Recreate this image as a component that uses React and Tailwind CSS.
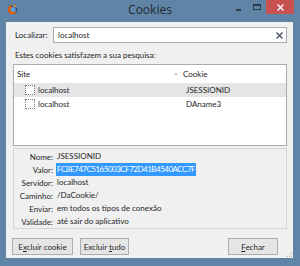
import React from "react";

const font = { fontFamily: 'Lato, "Open Sans", sans-serif' };

function FirefoxIcon() {
  return (
    <svg width="11" height="11" viewBox="0 0 16 16">
      <circle cx="8" cy="8" r="7" fill="#2b4c9b" />
      <circle cx="8.5" cy="8.5" r="4" fill="#5aa0e0" />
      <path d="M1.5 9 C1 5 3.5 1.5 7.5 1 C6 2.5 6 4 7 5 C5 5.5 4.5 8 6 10 C8 12.5 12 12 14 9 C14 12 11.5 15 8 15 C4.5 15 2 12.5 1.5 9 Z" fill="#e66000" />
      <path d="M7.5 1 C10 0.8 13 2.5 14.3 5.5 C13 4.5 11.5 4.2 10.5 4.6 C9.5 3 8.3 2 7.5 1 Z" fill="#f5a623" />
    </svg>
  );
}

export default function App() {
  const details = [
    ["Nome:", "JSESSIONID", false],
    ["Valor:", "FC8E747C5165003CF72D41B4540ACC7F", true],
    ["Servidor:", "localhost", false],
    ["Caminho:", "/DaCookie/", false],
    ["Enviar:", "em todos os tipos de conexão", false],
    ["Validade:", "até sair do aplicativo", false],
  ];
  return (
    <div className="w-[300px] h-[266px] bg-[#6084a5] flex flex-col text-[8px] text-[#1e1e1e] whitespace-nowrap" style={font}>
      <div className="h-[22px] relative flex items-center shrink-0">
        <div className="absolute left-[7px] top-[4px]">
          <FirefoxIcon />
        </div>
        <div className="w-full text-center text-[12px] text-[#202a33] leading-none pb-[2px]" style={{ fontFamily: '"Open Sans", sans-serif' }}>Cookies</div>
        <div className="absolute left-[236px] top-[9px] w-[5px] h-[2px] bg-[#2d3c4a]" />
        <div className="absolute left-[253px] top-[4px] w-[8px] h-[6px] border border-[#2d3c4a] border-t-2" />
        <div className="absolute left-[266px] top-0 w-[28px] h-[14px] bg-[#c75050] flex items-center justify-center">
          <svg width="7" height="7" viewBox="0 0 7 7">
            <path d="M0.5 0.5 L6.5 6.5 M6.5 0.5 L0.5 6.5" stroke="#fff" strokeWidth="1.4" />
          </svg>
        </div>
      </div>
      <div className="flex-1 ml-[6px] mr-[7px] mb-[8px] bg-[#f0f0f0] pl-[7px] pr-[6px] pt-[5px] flex flex-col relative">
        <div className="flex items-center h-[16px]">
          <span className="w-[40px] pl-[2px]">Localizar:</span>
          <div className="flex-1 h-[16px] bg-white border border-[#abadb3] flex items-center pl-[4px] pr-[3px]">
            <span className="flex-1">localhost</span>
            <svg width="7" height="7" viewBox="0 0 7 7">
              <path d="M0.5 0.5 L6.5 6.5 M6.5 0.5 L0.5 6.5" stroke="#4d5a66" strokeWidth="1.5" />
            </svg>
          </div>
        </div>
        <div className="mt-[6px] h-[12px] leading-[12px] pl-[2px]">Estes cookies satisfazem a sua pesquisa:</div>
        <div className="mt-[3px] h-[82px] bg-white border border-[#acacac] flex flex-col">
          <div className="h-[18px] flex items-center">
            <span className="w-[160px] pl-[3px]">Site</span>
            <span className="w-[9px] text-[6px] text-[#777]">^</span>
            <span>Cookie</span>
          </div>
          <div className="h-[14px] flex items-center bg-[#e5e5e5]">
            <span className="w-[10px] h-[10px] ml-[11px] mr-[3px] border border-dotted border-[#777] bg-white" />
            <span className="w-[146px]">localhost</span>
            <span className="pl-[2px]">JSESSIONID</span>
          </div>
          <div className="h-[14px] flex items-center">
            <span className="w-[10px] h-[10px] ml-[11px] mr-[3px] border border-dotted border-[#777] bg-white" />
            <span className="w-[146px]">localhost</span>
            <span className="pl-[2px]">DAname3</span>
          </div>
        </div>
        <div className="mt-[2px] h-[81px] border border-[#d5d5d5] flex flex-col pt-[1px]">
          {details.map(([k, v, sel]) => (
            <div key={k} className="h-[13.5px] flex items-center">
              <span className="w-[39px] text-right">{k}</span>
              <span className={"ml-[3px] px-[1px] leading-[13px] " + (sel ? "bg-[#3399ff] text-white tracking-[-0.5px]" : "")}>{v}</span>
            </div>
          ))}
        </div>
        <div className="mt-[9px] flex items-center">
          <div className="w-[61px] h-[17px] border border-[#adadad] bg-[#e5e5e5] flex items-center justify-center -ml-[1px]">
            <span>E<span className="underline">x</span>cluir cookie</span>
          </div>
          <div className="ml-[7px] w-[49px] h-[17px] border border-[#adadad] bg-[#e5e5e5] flex items-center justify-center">
            <span>Excluir <span className="underline">t</span>udo</span>
          </div>
          <div className="ml-auto mr-[9px] w-[50px] h-[17px] border border-[#adadad] bg-[#e5e5e5] flex items-center justify-center">
            <span><span className="underline">F</span>echar</span>
          </div>
        </div>
        <div className="absolute right-[1px] bottom-[1px] grid grid-cols-3 gap-[1px]">
          <span className="w-[1px] h-[1px]" />
          <span className="w-[1px] h-[1px]" />
          <span className="w-[1px] h-[1px] bg-[#b5b5b5]" />
          <span className="w-[1px] h-[1px]" />
          <span className="w-[1px] h-[1px] bg-[#b5b5b5]" />
          <span className="w-[1px] h-[1px] bg-[#b5b5b5]" />
          <span className="w-[1px] h-[1px] bg-[#b5b5b5]" />
          <span className="w-[1px] h-[1px] bg-[#b5b5b5]" />
          <span className="w-[1px] h-[1px] bg-[#b5b5b5]" />
        </div>
      </div>
    </div>
  );
}
